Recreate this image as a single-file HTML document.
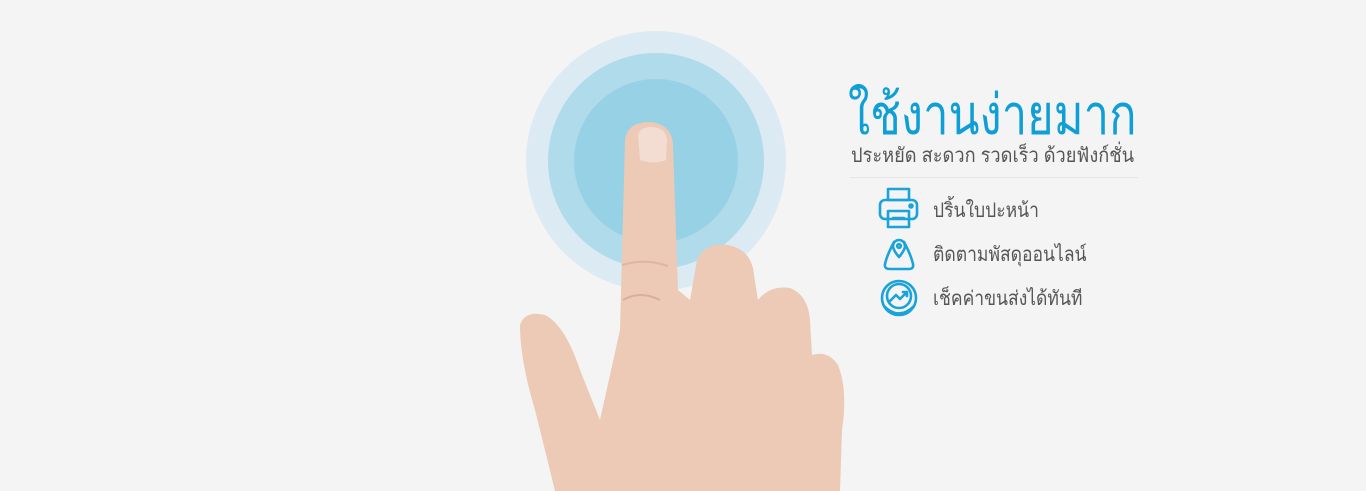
<!DOCTYPE html>
<html><head><meta charset="utf-8"><style>
body{margin:0;width:1366px;height:491px;background:#f4f4f4;overflow:hidden;position:relative;font-family:"Liberation Sans","DejaVu Sans",sans-serif;}
.t{position:absolute;left:848px;top:80px;font-size:56px;color:#0f9fd6;line-height:70px;white-space:nowrap;transform:scaleX(0.81);transform-origin:left top}
.s{position:absolute;left:851px;top:139px;font-size:20px;color:#555;white-space:nowrap;transform:scaleX(0.91);transform-origin:left top}
.hr{position:absolute;left:850px;top:177px;width:288px;height:1px;background:#e6e6e6}
.i{position:absolute;left:933px;font-size:20px;color:#555;white-space:nowrap;transform:scaleX(0.875);transform-origin:left top}
</style></head><body>
<svg width="1366" height="491" style="position:absolute;left:0;top:0">
<circle cx="656" cy="161" r="130" fill="#dcebf3"/>
<circle cx="656" cy="161" r="108" fill="#b0dbeb"/>
<circle cx="656" cy="161" r="82" fill="#96d1e6"/>
<g fill="#eccab6">
<path d="M625 140 Q627 122 650 122 Q672 124 673 145 L678 290 L690 300 L697 260 Q705 242 728 245 Q752 250 754 275 L758 300 Q770 285 790 288 Q808 295 810 320 L812 355 Q828 350 838 365 Q848 390 842 430 L840 491 L555 491 Q545 450 535 410 Q520 360 520 325 Q525 310 545 315 Q565 325 580 370 L600 420 L620 330 Z"/>
</g>
<path d="M638 135 Q640 127 652 127 Q666 128 667 140 L666 160 Q654 165 640 160 Z" fill="#f3ddd3"/>
<path d="M623 300 Q640 290 660 300" stroke="#d8b09a" stroke-width="2" fill="none"/>
<path d="M622 265 Q645 258 668 266" stroke="#dcb6a2" stroke-width="2" fill="none"/>
<g stroke="#1aa3d8" stroke-width="2.6" fill="none" stroke-linecap="round" stroke-linejoin="round">
<rect x="880" y="200" width="37" height="19" rx="5"/>
<rect x="888" y="189" width="21" height="11"/>
<rect x="888" y="211" width="21" height="16"/>
<line x1="893" y1="218" x2="904" y2="218"/>
<circle cx="911" cy="206" r="1.5"/>
<path d="M894 242 Q887 255 885 264 Q884 269 890 269 L909 269 Q914 269 913 264 Q911 255 904 242"/>
<path d="M899 257 Q893 250 893 246 A6 6 0 0 1 905 246 Q905 250 899 257 Z"/>
<circle cx="899" cy="246" r="1.8"/>
<circle cx="899" cy="298" r="17"/>
<circle cx="899" cy="296" r="12"/>
<path d="M890 301 L896 295 L900 299 L907 292 M903 292 L907 292 L907 296"/>
<path d="M884 306 Q899 321 914 306"/>
</g>
</svg>
<div class="t">ใช้งานง่ายมาก</div>
<div class="s">ประหยัด สะดวก รวดเร็ว ด้วยฟังก์ชั่น</div>
<div class="hr"></div>
<div class="i" style="top:194px">ปริ้นใบปะหน้า</div>
<div class="i" style="top:238px">ติดตามพัสดุออนไลน์</div>
<div class="i" style="top:282px">เช็คค่าขนส่งได้ทันที</div>
</body></html>
